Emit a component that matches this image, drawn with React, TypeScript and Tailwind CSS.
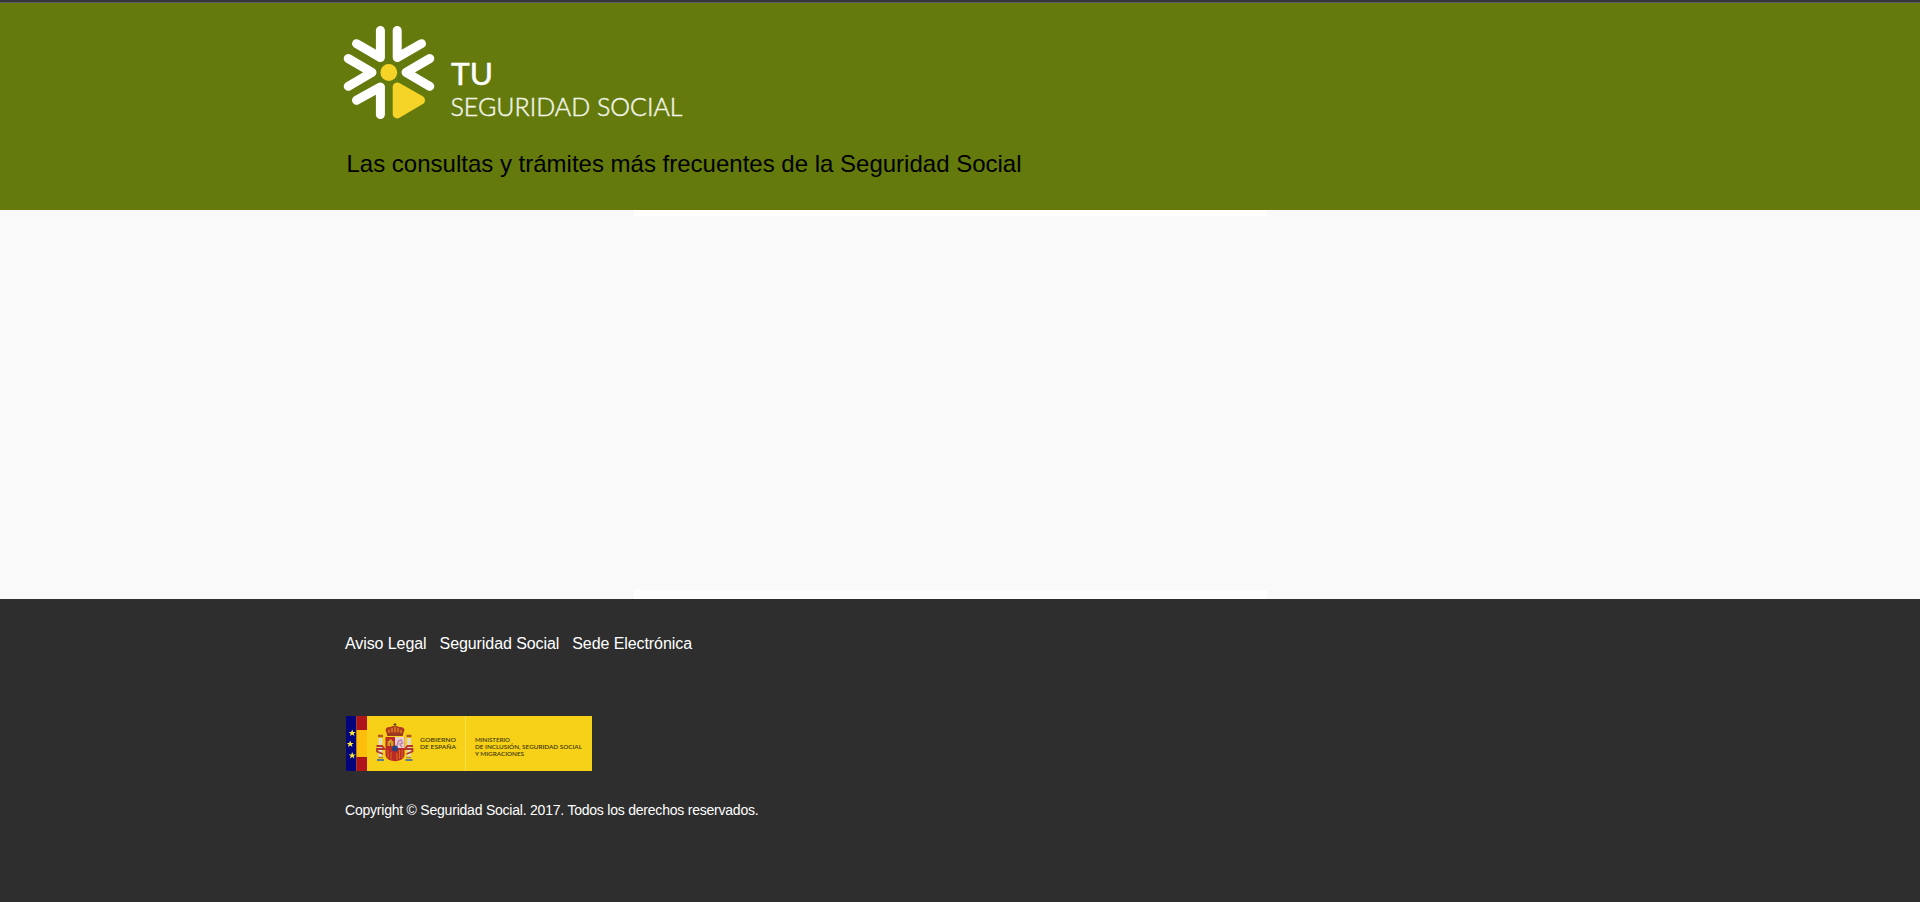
const ARM = 'stroke-white [stroke-linecap:round] [stroke-linejoin:round] fill-none';

function Logo() {
  return (
    <svg className="block" width="360" height="112" viewBox="340 20 360 112" role="img" aria-label="Tu Seguridad Social">
      <g className={ARM} strokeWidth="9">
        <path d="M380.400 30.500V57.500L356.500 43.700" />
        <path d="M397.200 30.500V57.500L421.500 43.700" />
        <path d="M348.200 58.500L372 72.300L348.200 86.300" />
        <path d="M429.800 58.500L406 72.300L429.800 86.300" />
        <path d="M356.500 100.300L380.400 87V114.500" />
      </g>
      <circle cx="388.800" cy="72.500" r="8.400" fill="#f5d327" />
      <path d="M397.200 87L420.500 100.200L397.200 114Z" fill="#f5d327" stroke="#f5d327" strokeWidth="9" strokeLinejoin="round" />
      <text x="451" y="84.500" textLength="42" lengthAdjust="spacingAndGlyphs" fill="#fff" className="font-['Lato',sans-serif] text-[31px] font-normal" stroke="#fff" strokeWidth=".5">TU</text>
      <text x="450.500" y="116" textLength="232" lengthAdjust="spacingAndGlyphs" fill="#f1f4e6" stroke="#f1f4e6" strokeWidth=".5" className="font-['Lato',sans-serif] text-[26px] font-light">SEGURIDAD SOCIAL</text>
    </svg>
  );
}

function Star({ x, y }: { x: number; y: number }) {
  return <path transform={`translate(${x} ${y})`} fill="#f7e63c" d="M0-3.600L1-1.100 3.600-1.100 1.500.5 2.300 3.100 0 1.500-2.300 3.100-1.500.5-3.600-1.100-1-1.100Z" />;
}

function Shield() {
  return (
    <g>
      <path d="M39.500 14Q40 10.500 44.500 11Q48.500 8.500 53 11Q58 10.500 58.500 14L56.500 20H41.500Z" fill="#b33b1f" />
      <path d="M43 17V14M46 16V12M49 16V10M52 16V12M55 17V14" stroke="#e2a51f" strokeWidth="1" />
      <path d="M41 18.500H57" stroke="#8c3a20" strokeWidth="2" />
      <path d="M49 7V11M47.500 8.500H50.500" stroke="#6d4a25" strokeWidth="1.200" />
      <path d="M39.500 21H58.500V39Q58.500 44.500 49 45.300Q39.500 44.500 39.500 39Z" fill="#bd2a25" />
      <path d="M49 21H58.500V32H49Z" fill="#e8cdd4" />
      <path d="M51 30L52.500 25 55 24 56.500 27 54 28 56 31" stroke="#c084a8" strokeWidth="1.500" fill="none" />
      <path d="M41.500 30V25H43V23.500H46V25H47.500V30Z" fill="#d59b22" />
      <path d="M44.500 27V30" stroke="#6e5525" strokeWidth="1" />
      <path d="M42 34V42M45 36V43.500M51 37V44M53.500 34V43M56 34V42" stroke="#d0701f" strokeWidth="1" />
      <circle cx="49" cy="32.500" r="3" fill="#264382" />
      <path d="M34.500 22V42M63 22V42" stroke="#dedbd2" strokeWidth="3.600" />
      <path d="M32 20H37M60.500 20H65.500" stroke="#b35a26" strokeWidth="2.400" />
      <path d="M30.500 30H36L38.500 33H31V35.500L37 38M67 30H61.500L59 33H66.500V35.500L60.500 38" stroke="#b5372c" strokeWidth="1.800" fill="none" />
      <path d="M32.500 41.500H37M60.500 41.500H65" stroke="#b5832a" strokeWidth="1.500" />
      <path d="M31 44H38M59.500 44H66.500" stroke="#5d7c98" strokeWidth="2.200" />
    </g>
  );
}

function GovernmentLogo() {
  const label = "font-['Lato',sans-serif] text-[6.5px] font-semibold";
  return (
    <svg className="block" width="246" height="55" viewBox="0 0 246 55" role="img" aria-label="Gobierno de España">
      <rect width="246" height="55" fill="#f7d117" />
      <rect width="10.500" height="55" fill="#03037a" />
      <rect x="10.500" width="10.500" height="55" fill="#b0141b" />
      <rect x="10.500" y="14" width="10.500" height="27" fill="#fcbd0b" />
      <Star x={6.2} y={17} />
      <Star x={4.2} y={28} />
      <Star x={6.2} y={39.5} />
      <Shield />
      <rect x="119" width="1" height="55" fill="#fbdd4a" />
      <g fill="#40370f" className={label}>
        <text x="74" y="25.700" textLength="36" lengthAdjust="spacingAndGlyphs">GOBIERNO</text>
        <text x="74" y="32.900" textLength="36" lengthAdjust="spacingAndGlyphs">DE ESPAÑA</text>
        <text x="129" y="25.700" textLength="35" lengthAdjust="spacingAndGlyphs">MINISTERIO</text>
        <text x="129" y="32.900" textLength="107" lengthAdjust="spacingAndGlyphs">DE INCLUSIÓN, SEGURIDAD SOCIAL</text>
        <text x="129" y="40" textLength="49" lengthAdjust="spacingAndGlyphs">Y MIGRACIONES</text>
      </g>
    </svg>
  );
}

export default function App() {
  return (
    <div className="flex h-[902px] flex-col overflow-hidden bg-[#f9f9f9] font-['Liberation_Sans',Arial,sans-serif]">
      <header className="h-[210px] border-t-2 border-[#35363a] bg-[#647a0c]">
        <div className="h-px bg-[#5f6064]" />
        <div className="pt-[17px] pl-[340px]">
          <Logo />
          <h1 className="mt-[18px] pl-[6.5px] text-2xl leading-7 whitespace-nowrap text-black">
            Las consultas y trámites más frecuentes de la Seguridad Social
          </h1>
        </div>
      </header>
      <main className="ml-[634px] flex h-[389px] w-[633px] flex-col justify-between">
        <div className="h-1.5 bg-white" />
        <div className="h-[9px] bg-white" />
      </main>
      <footer className="flex-1 bg-[#2e2e2e] pl-[345px] text-white">
        <nav className="flex gap-[13px] pt-[33px] text-base leading-6 tracking-[-0.08px]">
          <a>Aviso Legal</a>
          <a>Seguridad Social</a>
          <a>Sede Electrónica</a>
        </nav>
        <div className="mt-[60px] pl-px">
          <GovernmentLogo />
        </div>
        <p className="mt-[29px] text-sm leading-5 tracking-[-0.22px]">Copyright © Seguridad Social. 2017. Todos los derechos reservados.</p>
      </footer>
    </div>
  );
}
